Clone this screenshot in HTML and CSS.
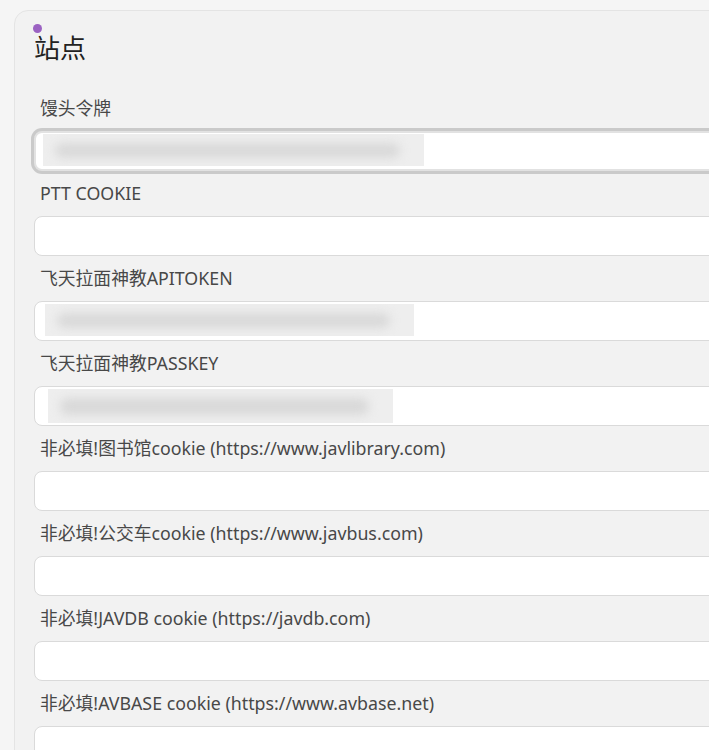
FILE: index.html
```html
<!DOCTYPE html>
<html lang="zh-CN">
<head>
<meta charset="utf-8">
<title>站点</title>
<link rel="stylesheet" href="styles.css">
</head>
<body>
<div class="page">
  <section class="card">
    <h2 class="title"><span class="dot"></span>站点</h2>
    <div class="fields">
      <div class="field">
        <label class="label">馒头令牌</label>
        <div class="box focused"><span class="redact r1"></span></div>
      </div>
      <div class="field">
        <label class="label">PTT COOKIE</label>
        <div class="box"></div>
      </div>
      <div class="field">
        <label class="label">飞天拉面神教APITOKEN</label>
        <div class="box"><span class="redact r2"></span></div>
      </div>
      <div class="field">
        <label class="label">飞天拉面神教PASSKEY</label>
        <div class="box"><span class="redact r3"></span></div>
      </div>
      <div class="field">
        <label class="label">非必填!图书馆cookie (https://www.javlibrary.com)</label>
        <div class="box"></div>
      </div>
      <div class="field">
        <label class="label">非必填!公交车cookie (https://www.javbus.com)</label>
        <div class="box"></div>
      </div>
      <div class="field">
        <label class="label">非必填!JAVDB cookie (https://javdb.com)</label>
        <div class="box"></div>
      </div>
      <div class="field">
        <label class="label">非必填!AVBASE cookie (https://www.avbase.net)</label>
        <div class="box"></div>
      </div>
    </div>
  </section>
</div>
</body>
</html>
```
FILE: styles.css
```css
html, body {
  margin: 0;
  padding: 0;
  overflow: hidden;
  background: #f5f5f5;
}
body {
  font-family: "Noto Sans", "Noto Sans CJK SC", sans-serif;
  color: #3c3c3c;
}
.page {
  padding: 10px 0 0 14px;
}
.card {
  background: #f2f2f2;
  border: 1px solid #e4e4e4;
  border-radius: 14px 14px 0 0;
  margin-right: -40px;
  padding: 20px 0 0 19px;
  min-height: 760px;
}
.title {
  position: relative;
  margin: 0;
  font-family: "Noto Sans CJK SC", sans-serif;
  font-size: 26px;
  line-height: 32px;
  font-weight: 400;
  color: #222;
}
.dot {
  position: absolute;
  left: -1px;
  top: -7px;
  width: 9px;
  height: 9px;
  border-radius: 50%;
  background: #9b62c2;
}
.fields {
  margin-top: 33px;
  display: flex;
  flex-direction: column;
  gap: 10px;
}
.field {
  display: flex;
  flex-direction: column;
  gap: 10px;
}
.label {
  display: block;
  padding-left: 6px;
  font-size: 17.8px;
  line-height: 25px;
  color: #484848;
}
.box {
  height: 40px;
  box-sizing: border-box;
  background: #fff;
  border: 1px solid #dadada;
  border-radius: 8px;
  padding: 2px 0 0 8px;
}
.box.focused {
  border: 2px solid #e2e2e2;
  box-shadow: 0 0 0 3px #cacaca;
  padding: 1px 0 0 7px;
}
.redact {
  display: block;
  position: relative;
  overflow: hidden;
  height: 32px;
  background: #eeeeee;
}
.redact::before {
  content: "";
  position: absolute;
  left: 12px;
  right: 24px;
  top: 9px;
  bottom: 8px;
  background: #d9d9d9;
  border-radius: 8px;
  filter: blur(5px);
}
.r1 { width: 381px; }
.r2 { width: 369px; margin-left: 2px; }
.r3 { width: 345px; margin-left: 5px; height: 34px; }
```
